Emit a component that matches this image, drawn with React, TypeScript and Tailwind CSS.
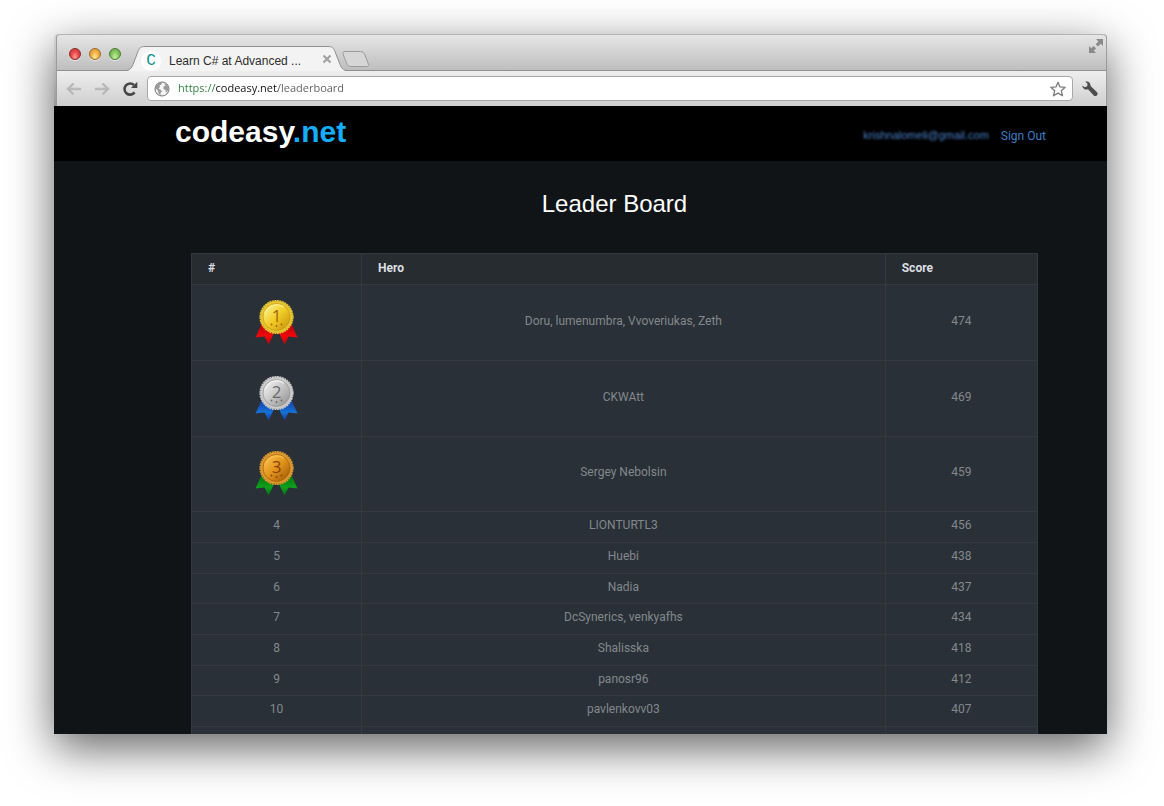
type Medal = {
  place: string
  edge: string
  light: string
  mid: string
  dark: string
  ink: string
  ribbon: string
  ribbonDark: string
}

const medals: Record<string, Medal> = {
  '1': { place: '1', edge: '#e3c535', light: '#fdf08a', mid: '#f0cd26', dark: '#cf9a10', ink: '#a8640f', ribbon: '#f0080c', ribbonDark: '#b80408' },
  '2': { place: '2', edge: '#cccccc', light: '#f0f0f0', mid: '#c6c6c6', dark: '#969696', ink: '#6a6a6e', ribbon: '#1672d6', ribbonDark: '#1638a0' },
  '3': { place: '3', edge: '#d99a32', light: '#f8bd4c', mid: '#e2941a', dark: '#a95f0a', ink: '#8c4208', ribbon: '#0ea01c', ribbonDark: '#067012' },
}

const heroes = [
  { rank: '1', name: 'Doru, lumenumbra, Vvoveriukas, Zeth', score: 474 },
  { rank: '2', name: 'CKWAtt', score: 469 },
  { rank: '3', name: 'Sergey Nebolsin', score: 459 },
  { rank: '4', name: 'LIONTURTL3', score: 456 },
  { rank: '5', name: 'Huebi', score: 438 },
  { rank: '6', name: 'Nadia', score: 437 },
  { rank: '7', name: 'DcSynerics, venkyafhs', score: 434 },
  { rank: '8', name: 'Shalisska', score: 418 },
  { rank: '9', name: 'panosr96', score: 412 },
  { rank: '10', name: 'pavlenkovv03', score: 407 },
]

function MedalIcon({ medal }: { medal: Medal }) {
  const face = `face-${medal.place}`
  const ribbon = `ribbon-${medal.place}`
  return (
    <svg className="mx-auto h-[46px] w-[44px]" viewBox="0 0 44 46">
      <defs>
        <linearGradient id={face} x1="0.1" y1="0.1" x2="0.9" y2="0.9">
          <stop offset="0" stopColor={medal.light} />
          <stop offset="0.5" stopColor={medal.mid} />
          <stop offset="1" stopColor={medal.dark} />
        </linearGradient>
        <linearGradient id={ribbon} x1="0" y1="0" x2="0" y2="1">
          <stop offset="0" stopColor={medal.ribbonDark} />
          <stop offset="0.6" stopColor={medal.ribbon} />
          <stop offset="1" stopColor={medal.ribbonDark} />
        </linearGradient>
      </defs>
      <path d="M6.500 25L.5 38.500L9.500 37.500L13.500 45.500L20.500 31Z" fill={`url(#${ribbon})`} />
      <path d="M36.500 25L42.500 38.500L33.500 37.500L29.500 45.500L22.500 31Z" fill={`url(#${ribbon})`} />
      <circle cx="21.500" cy="18" r="16.300" fill={medal.dark} stroke={medal.edge} strokeWidth="1.600" strokeDasharray="1.900 0.660" />
      <circle cx="21.500" cy="18" r="15.700" fill={medal.edge} />
      <circle cx="21.500" cy="18" r="13.500" fill={`url(#${face})`} stroke={medal.dark} strokeWidth="0.800" />
      <path d="M10 15a12.500 12.500 0 0 1 19-7" fill="none" stroke={medal.light} strokeWidth="1.200" />
      <text x="21.500" y="23" textAnchor="middle" fontSize="17" fontFamily="Open Sans, sans-serif" fill={medal.ink}>
        {medal.place}
      </text>
      <g fill={medal.ink}>
        <circle cx="16.500" cy="25.500" r="0.900" />
        <circle cx="21.500" cy="27" r="0.900" />
        <circle cx="26.500" cy="25.500" r="0.900" />
      </g>
    </svg>
  )
}

function TrafficLights() {
  const base = 'size-3 rounded-full border shadow-[0_1px_0_rgba(255,255,255,0.6)]'
  return (
    <div className="flex gap-2">
      <button aria-label="Close window" className={`${base} border-[#8a2a28] bg-radial-[at_50%_80%] from-[#ff9c90] via-[#e8474a] to-[#b8363a]`} />
      <button aria-label="Minimize window" className={`${base} border-[#9a6a24] bg-radial-[at_50%_80%] from-[#ffe79a] via-[#f0b043] to-[#c88a3a]`} />
      <button aria-label="Zoom window" className={`${base} border-[#4d7a34] bg-radial-[at_50%_80%] from-[#c8f0a0] via-[#85c860] to-[#5c9a48]`} />
    </div>
  )
}

function TabStrip() {
  return (
    <div className="flex h-[37px] items-end rounded-t border-t border-[#b4b4b4] bg-linear-to-b from-[#e6e6e6] to-[#bdbdbd] pl-3 pr-0.5 shadow-[inset_0_-1px_0_#8f8f8f]">
      <div className="mb-[11px]">
        <TrafficLights />
      </div>
      <div className="ml-1 flex h-[25px] flex-1 items-end">
        <svg className="h-[25px] w-5 shrink-0" viewBox="0 0 20 25">
          <path d="M0 25C5 25 6.500 22 8 18.500L13 5.500C14.500 1.800 16 .5 20 .5V25Z" fill="#f3f3f3" />
          <path d="M0 24.500C5 24.500 6.500 22 8 18.500L13 5.500C14.500 1.800 16 .5 20 .5" fill="none" stroke="#8f8f8f" />
        </svg>
        <div className="relative z-10 flex h-[25px] w-[183px] items-center border-t border-[#8f8f8f] bg-[#f3f3f3] pt-1">
          <span className="-ml-1 flex size-5 items-center justify-center rounded-full bg-white font-['Liberation_Mono',monospace] text-base leading-5 text-[#0b8f8a]">C</span>
          <span className="ml-2 flex-1 whitespace-nowrap text-xs text-[#2e2e2e]">Learn C# at Advanced ...</span>
          <button aria-label="Close tab" className="-mr-1 mb-1">
            <svg className="size-2.5" viewBox="0 0 10 10">
              <path d="M1.500 1.500L8.500 8.500M8.500 1.500L1.500 8.500" stroke="#a2a2a2" strokeWidth="2.200" />
            </svg>
          </button>
        </div>
        <svg className="h-[25px] w-5 shrink-0" viewBox="0 0 20 25">
          <path d="M20 25C15 25 13.500 22 12 18.500L7 5.500C5.500 1.800 4 .5 0 .5V25Z" fill="#f3f3f3" />
          <path d="M20 24.500C15 24.500 13.500 22 12 18.500L7 5.500C5.500 1.800 4 .5 0 .5" fill="none" stroke="#8f8f8f" />
        </svg>
        <button aria-label="New tab" className="-ml-1.5 mb-1">
          <svg className="h-4 w-7" viewBox="0 0 28 16">
            <path d="M3 .5H18.500C21 .5 22 1.500 23 4L26 12C27 14.500 26.500 15.500 24.500 15.500H9C6.500 15.500 5.500 14.500 4.500 12L1.300 4C.5 1.500 1 .5 3 .5Z" fill="#d6d6d6" stroke="#9b9b9b" />
          </svg>
        </button>
      </div>
      <button aria-label="Full screen" className="self-start pt-[3px]">
        <svg className="size-4" viewBox="0 0 16 16" fill="#8a8a8a">
          <path d="M8 1H15V8L12.800 5.800L10 8.600L7.600 6.200L10.400 3.400Z" />
          <path d="M8 15H1V8L3.200 10.200L5.500 7.900L8.100 10.500L5.800 12.800Z" />
        </svg>
      </button>
    </div>
  )
}

function Toolbar() {
  return (
    <div className="flex h-[35px] items-center bg-linear-to-b from-[#eeeeee] to-[#cfcfcf] pl-[9px] pr-2">
      <div className="flex gap-3">
        <button aria-label="Back">
          <svg className="size-4" viewBox="0 0 16 16" fill="none" stroke="#b9b9b9" strokeWidth="2.400">
            <path d="M7.500 2.500L2 8L7.500 13.500M2 8H15" />
          </svg>
        </button>
        <button aria-label="Forward">
          <svg className="size-4" viewBox="0 0 16 16" fill="none" stroke="#b9b9b9" strokeWidth="2.400">
            <path d="M8.500 2.500L14 8L8.500 13.500M14 8H1" />
          </svg>
        </button>
        <button aria-label="Reload">
          <svg className="size-4" viewBox="0 0 16 16">
            <path d="M12.600 11.400A5.600 5.600 0 1 1 12 4" fill="none" stroke="#474747" strokeWidth="2.600" />
            <path d="M15.300 .8V7H9Z" fill="#474747" />
          </svg>
        </button>
      </div>
      <div className="mx-[9px] flex h-[25px] flex-1 items-center rounded border border-[#a8a8a8] bg-white px-1.5">
        <svg className="size-4 shrink-0" viewBox="0 0 16 16">
          <circle cx="8" cy="8" r="7" fill="#f4f4f4" stroke="#6f6f6f" />
          <path d="M2 4.500L5 1.800L8 1.500L7.500 3.500L5.500 4.500L6 6L4.500 7.500L7 9L8 10.500L6.500 12L6.500 14.500L4.500 12.500L4 9.500L1.600 7.500Z" fill="#9a9a9a" />
          <path d="M10 1.800L13 3.500L14.600 7L13.500 10.500L12 11.500L11.500 9L9.500 8L9.500 5.500L11.500 4.500Z" fill="#9a9a9a" />
        </svg>
        <input
          aria-label="Address"
          defaultValue="https://codeasy.net/leaderboard"
          className="ml-2 min-w-0 flex-1 bg-[linear-gradient(90deg,#2b7d3c_37px,#111111_37px,#111111_100px,#5c5c5c_100px)] bg-clip-text font-['Open_Sans',sans-serif] text-[11px] text-transparent caret-black outline-none"
        />
        <button aria-label="Bookmark this page">
          <svg className="size-4" viewBox="0 0 16 16">
            <path d="M8 1.200L10 5.900L15.200 6.300L11.300 9.700L12.500 14.800L8 12.100L3.500 14.800L4.700 9.700L.8 6.300L6 5.900Z" fill="#fff" stroke="#7a7a7a" strokeWidth="1.300" strokeLinejoin="round" />
          </svg>
        </button>
      </div>
      <button aria-label="Settings">
        <svg className="size-4" viewBox="0 0 16 16">
          <path d="M3.200 .8C5.800 -.2 8.800 1.600 8.600 5L15.300 11.600C16.300 13.600 14.200 15.800 12.200 14.900L6 8.300C3.400 9.300 .4 7.600 .3 4.400L2.700 6.200L5.300 5.200L5.400 2.600Z" fill="#4d4d4d" />
        </svg>
      </button>
    </div>
  )
}

function Leaderboard() {
  return (
    <table className="w-full table-fixed border-collapse bg-[#2a3037] text-center font-['Roboto',sans-serif] text-xs text-[#82888c]">
      <colgroup>
        <col className="w-[170px]" />
        <col />
        <col className="w-[18%]" />
      </colgroup>
      <thead className="bg-[#272c31] text-left text-[#dcdfe1]">
        <tr className="h-[31px]">
          <th className="border border-[#33393f] px-4 pb-0.5 font-bold">#</th>
          <th className="border border-[#33393f] px-4 pb-0.5 font-bold">Hero</th>
          <th className="border border-[#33393f] px-4 pb-0.5 font-bold">Score</th>
        </tr>
      </thead>
      <tbody>
        {heroes.map((hero) =>
          medals[hero.rank] ? (
            <tr key={hero.rank} className="h-[76px] nth-[3n]:h-[75px]">
              <td className="border border-[#33393f] pb-0.5">
                <MedalIcon medal={medals[hero.rank]} />
              </td>
              <td className="border border-[#33393f] pb-1">{hero.name}</td>
              <td className="border border-[#33393f] pb-1">{hero.score}</td>
            </tr>
          ) : (
            <tr key={hero.rank} className="h-[31px] nth-[3n]:h-[30px]">
              <td className="border border-[#33393f] pb-1">{hero.rank}</td>
              <td className="border border-[#33393f] pb-1">{hero.name}</td>
              <td className="border border-[#33393f] pb-1">{hero.score}</td>
            </tr>
          )
        )}
        <tr className="h-[31px]">
          <td className="border border-[#33393f]" />
          <td className="border border-[#33393f]" />
          <td className="border border-[#33393f]" />
        </tr>
      </tbody>
    </table>
  )
}

export default function App() {
  return (
    <div className="h-screen overflow-hidden bg-white pb-[72px] pl-[54px] pr-[57px] pt-[34px] font-['Liberation_Sans',Arial,sans-serif]">
      <div className="flex h-full flex-col rounded-t shadow-[0_14px_46px_rgba(0,0,0,0.62)]">
        <div className="shrink-0 rounded-t bg-linear-to-b from-[#d4d4d4] to-[#9a9a9a] pl-0.5">
          <div className="rounded-t border-x border-[#9c9c9c]">
            <TabStrip />
            <Toolbar />
          </div>
        </div>
        <div className="min-h-0 flex-1 overflow-hidden bg-[#101416]">
          <header className="flex h-[55px] items-center justify-between bg-black pl-[121px] pr-[61px]">
            <a href="/" className="pb-1 text-3xl font-bold leading-8 text-white">
              codeasy<span className="text-[#14aefc]">.net</span>
            </a>
            <nav className="flex items-center gap-3 pt-1 text-[#3f7cc4]">
              <a href="/profile" className="text-[11px] text-[#4a80cc] blur-[1px]">krishnalomeli@gmail.com</a>
              <a href="/signout" className="font-['Roboto',sans-serif] text-xs">Sign Out</a>
            </nav>
          </header>
          <main className="pl-[137px] pr-[69px]">
            <h1 className="pb-[33px] pt-[27px] text-center text-2xl text-white">Leader Board</h1>
            <Leaderboard />
          </main>
        </div>
      </div>
    </div>
  )
}
